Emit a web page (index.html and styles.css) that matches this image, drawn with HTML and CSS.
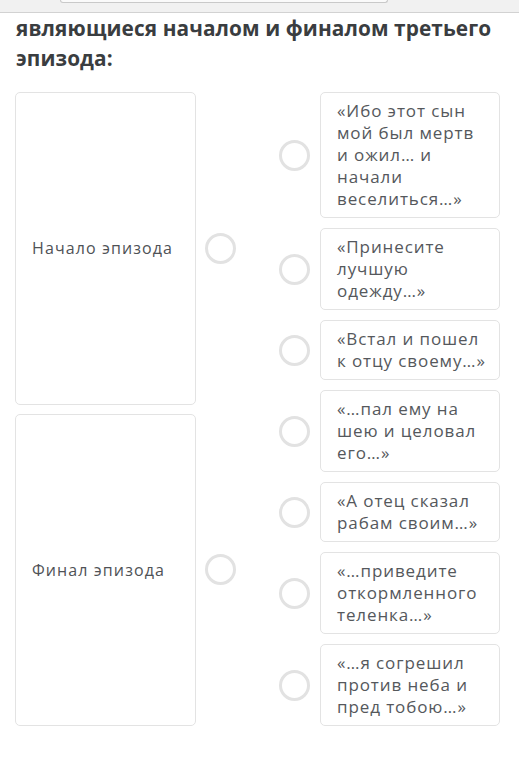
FILE: index.html
```html
<!DOCTYPE html>
<html lang="ru">
<head>
<meta charset="utf-8">
<link rel="stylesheet" href="styles.css">
</head>
<body>
<div class="topbar"><div class="topbox"></div></div>
<h1 class="title">являющиеся началом и финалом третьего эпизода:</h1>
<div class="match">
  <div class="left">
    <div class="lrow"><div class="lcard">Начало эпизода</div><span class="dot"></span></div>
    <div class="lrow"><div class="lcard">Финал эпизода</div><span class="dot"></span></div>
  </div>
  <div class="right">
    <div class="rrow"><span class="dot"></span><div class="rcard">«Ибо этот сын мой был мертв и ожил… и начали веселиться…»</div></div>
    <div class="rrow"><span class="dot"></span><div class="rcard">«Принесите лучшую одежду…»</div></div>
    <div class="rrow"><span class="dot"></span><div class="rcard">«Встал и пошел к отцу своему…»</div></div>
    <div class="rrow"><span class="dot"></span><div class="rcard">«…пал ему на шею и целовал его…»</div></div>
    <div class="rrow"><span class="dot"></span><div class="rcard">«А отец сказал рабам своим…»</div></div>
    <div class="rrow"><span class="dot"></span><div class="rcard">«…приведите откормленного теленка…»</div></div>
    <div class="rrow"><span class="dot"></span><div class="rcard">«…я согрешил против неба и пред тобою…»</div></div>
  </div>
</div>
</body>
</html>
```
FILE: styles.css
```css
* { box-sizing: border-box; }
html, body { margin: 0; padding: 0; background: #fff; }
body { font-family: "Open Sans", "Noto Sans", sans-serif; color: #555; }

.topbar {
  height: 13px;
  background: #f1f1f1;
  border-bottom: 1px solid #d2d2d2;
}
.topbox {
  margin-left: 60px;
  width: 328px;
  height: 3px;
  background: #fafafa;
  border: 1px solid #c9c9c9;
  border-top: none;
  border-radius: 0 0 3px 3px;
}

.title {
  margin: 0;
  padding: 0 10px 0 16px;
  font-size: 20.8px;
  line-height: 30px;
  font-weight: 700;
  color: #3a3d40;
  letter-spacing: 0.1px;
}

.match {
  display: flex;
  margin-top: 19px;
  padding-left: 15px;
}

.left {
  display: grid;
  grid-template-rows: 1fr 1fr;
  row-gap: 9px;
}
.lrow {
  display: flex;
  align-items: center;
  gap: 9px;
}
.lcard {
  width: 181px;
  height: 100%;
  display: flex;
  align-items: center;
  padding-left: 16px;
  border: 1px solid #e3e3e3;
  border-radius: 5px;
  font-size: 16px;
  letter-spacing: 1.1px;
  color: #4f5256;
}

.right {
  display: flex;
  flex-direction: column;
  gap: 10px;
  margin-left: 43px;
}
.rrow {
  display: flex;
  align-items: center;
  gap: 10px;
}
.rcard {
  width: 180px;
  padding: 7px 10px 7px 16px;
  border: 1px solid #e3e3e3;
  border-radius: 5px;
  font-size: 17px;
  line-height: 22px;
  letter-spacing: 0.9px;
  color: #55585c;
}

.dot {
  flex: none;
  width: 31px;
  height: 31px;
  border: 3px solid #e2e2e2;
  border-radius: 50%;
}
```
